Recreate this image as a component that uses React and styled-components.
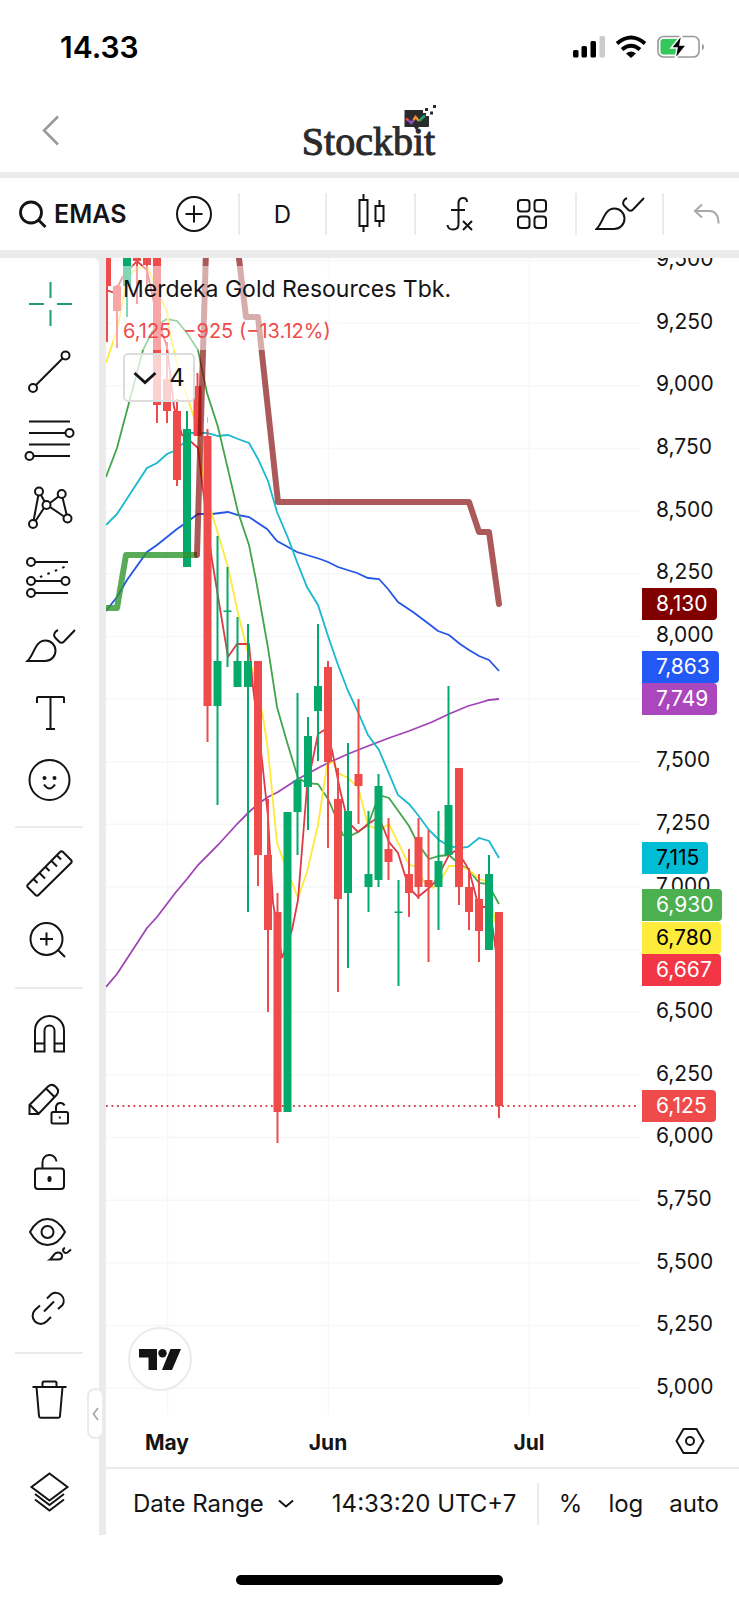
import React, { useState } from 'react'
import styled, { createGlobalStyle } from 'styled-components'

// month boundaries and every 250 in price, in chart units
const gridX = [167.5, 328.5, 529.5]
const gridY = Array.from({ length: 19 }, (_, i) => 260.5 + i * 62.65)

// x, high, low, body top, body bottom, colour
const candles = [
    [107, 250, 342, 250, 286, 'r'],
    [117, 285, 348, 286, 311, 'r'],
    [127, 250, 317, 250, 286, 'g'],
    [137, 250, 304, 250, 261, 'r'],
    [147, 250, 286, 250, 265, 'r'],
    [157, 250, 423, 250, 405, 'r'],
    [167, 342, 423, 379, 411, 'r'],
    [177, 399, 486, 411, 480, 'r'],
    [187, 411, 567, 429, 567, 'g'],
    [197.5, 373, 436, 386, 436, 'r'],
    [207.5, 429, 742, 436, 706, 'r'],
    [217.5, 536, 805, 661, 706, 'g'],
    [227.5, 567, 667, 610.5, 612, 'g'],
    [237.5, 617, 687, 661, 687, 'g'],
    [248, 624, 912, 661, 687, 'g'],
    [258, 661, 886, 661, 855, 'r'],
    [268, 799, 1012, 855, 930, 'r'],
    [277.5, 893, 1143, 912, 1112, 'r'],
    [287.5, 812, 1112, 812, 1112, 'g'],
    [297.5, 693, 855, 780, 812, 'g'],
    [308, 717, 830, 736, 787, 'g'],
    [318, 624, 761, 686, 711, 'g'],
    [328, 661, 848, 667, 762, 'r'],
    [338, 768, 992, 799, 899, 'r'],
    [348, 743, 968, 811, 893, 'g'],
    [358.5, 699, 824, 774, 786, 'r'],
    [368.5, 811, 912, 874, 887, 'g'],
    [378.5, 774, 887, 786, 880, 'g'],
    [388.5, 818, 880, 849, 862, 'r'],
    [398.5, 880, 986, 911.5, 913, 'g'],
    [409, 849, 917, 874, 893, 'r'],
    [418.5, 818, 899, 837, 887, 'r'],
    [428.5, 830, 962, 880, 887, 'r'],
    [438.5, 811, 930, 861, 887, 'g'],
    [448.5, 686, 855, 805, 855, 'g'],
    [459, 768, 905, 768, 887, 'r'],
    [469, 868, 930, 887, 912, 'r'],
    [479, 874, 962, 899, 931, 'r'],
    [489, 855, 950, 874, 950, 'g'],
    [499, 912, 1118, 912, 1106, 'r'],
]

const averages = [
    ['#a044b5', '106,987 117,974 147,928 157,917 176,892 187,879 198,865 218,845 238,823 248,813 258,804 268,797 278,792 298,779 320,767 328,763 348,754 368,746 389,738 409,731 432,722 449,714 468,706 479,703 489,700 499,699'],
    ['#2455e6', '106,611 117,597 127,580 147,552 157,545 177,529 187,522 198,514 212,514 228,512 238,515 249,517 267,529 277,541 297,552 320,559 328,562 338,567 357,573 368,578 379,579 388,589 398,602 413,612 429,624 438,631 449,635 460,644 469,650 479,656 489,660 499,671'],
    ['#18b8cf', '106,525 117,514 147,468 157,463 167,454 174,451 186,441 190,433 207,433 218,436 228,435 238,439 249,443 258,459 268,481 277,512 288,538 297,562 307,587 318,605 328,636 338,665 348,691 358,712 368,735 379,750 398,795 409,804 418,815 429,830 439,840 449,846 459,848 468,847 479,838 489,841 499,858'],
    ['#43a54a', '106,477 117,448 143,350 152,332 162,322 167,319 177,321 187,333 198,350 207,393 218,427 238,512 249,545 256,580 268,648 277,707 287,742 298,778 307,783 318,784 328,799 335,815 343,835 348,837 358,832 368,825 379,795 389,798 409,826 418,844 429,859 439,856 449,855 459,864 469,870 479,883 488,884 499,904'],
    ['#fdea3b', '106,363 117,330 127,280 137,267 148,268 157,290 167,312 170,333 180,377 187,396 198,430 203,477 212,514 228,567 238,613 248,653 258,693 263,717 268,750 277,843 284,862 298,898 307,872 318,825 327,765 333,762 338,773 348,778 358,787 368,825 379,830 389,824 409,865 415,866 425,883 433,888 439,883 449,866 459,866 469,870 479,879 489,882 493,910 499,940'],
    ['#dc3a45', '106,290 115,293 122,278 137,261 147,270 157,317 167,347 174,407 182,435 187,438 198,448 203,490 212,560 228,657 237,644 249,644 253,687 262,760 268,817 273,903 282,958 292,930 298,900 307,787 318,734 324,730 332,750 340,790 348,822 358,832 368,824 379,817 389,842 398,853 409,888 418,897 429,888 435,882 449,855 455,851 463,860 469,870 477,900 483,907 489,907 493,930 499,975'],
]

const months = ['May', 'Jun', 'Jul']
const prices = ['9,500', '9,250', '9,000', '8,750', '8,500', '8,250', '8,000', '', '7,500', '7,250', '7,000', '', '6,500', '6,250', '6,000', '5,750', '5,500', '5,250', '5,000']

// y is the distance from the top of the price scale
const tags = [
    { text: '8,130', y: 330, bg: '#800000' },
    { text: '7,863', y: 393, bg: '#2458f5' },
    { text: '7,749', y: 425, bg: '#ab47bc' },
    { text: '7,115', y: 584, bg: '#00bcd4', dark: true },
    { text: '6,930', y: 631, bg: '#4caf50' },
    { text: '6,780', y: 664, bg: '#ffeb3b', dark: true },
    { text: '6,667', y: 696, bg: '#f23645' },
    { text: '6,125', y: 832, bg: '#ef4b4b' },
]

const Brush = () => (
    <>
        <path d="M2.5 41C9 35 10 20.5 20.5 20.5c5.500 0 10 4.500 10 10C30.500 36.500 26 41 20 41z" />
        <path d="M33 10c-3.500 1.500-5 5-3 7.500l4 4c1.500 1.500 3.500 1.500 5 0L50 10" />
    </>
)

const tools = [
    [
        ['Cross', <g stroke="#1fa06a"><path d="M4 24h15M32 24h15M25.500 2v16M25.500 30v16" /></g>],
        ['Trend line', <><path d="M11 37L37.500 10.500" /><circle cx="8" cy="40" r="4" /><circle cx="40.500" cy="7.500" r="4" /></>],
        ['Fib retracement', <><path d="M4 5.500h41M4 17h36M4 28.500h41M9 40h36" /><circle cx="44.500" cy="17" r="4" /><circle cx="4.500" cy="40" r="4" /></>],
        ['Patterns', <>
            <path d="M13.300 11.500L8.700 36M16 11l3.500 6.500M19 24L10.500 37M25 19l8.500-6.500M25 23l14 9.500M37.600 14l4 16.500" />
            <circle cx="14" cy="7.500" r="4" /><circle cx="36.700" cy="10" r="4" /><circle cx="21.500" cy="21" r="4" />
            <circle cx="8" cy="40" r="4" /><circle cx="42.500" cy="34.500" r="4" />
        </>],
        ['Forecast', <>
            <path d="M10 10h33M10 29h26M10 41h33" /><path d="M15 25L43 13.500" strokeDasharray="2.500 5.500" />
            <circle cx="6" cy="10" r="4" /><circle cx="6" cy="29" r="4" /><circle cx="6" cy="41" r="4" /><circle cx="40.500" cy="29" r="4" />
        </>],
        ['Brush', <Brush />],
        ['Text', <path d="M12 15v-5q0-1 1-1h25q1 0 1 1v5M25.500 9v32M21 41h9" />],
        ['Icons', <>
            <circle cx="24.500" cy="24" r="20" /><path d="M19 28.500q5.500 8 11 0" />
            <g fill="#141414" stroke="none"><circle cx="19.500" cy="22" r="2" /><circle cx="29.500" cy="22" r="2" /></g>
        </>],
    ],
    [
        ['Measure', <>
            <path d="M3 35.500L35 3q1.500-1.500 3 0l8 8q1.500 1.500 0 3L13.500 46q-1.500 1.500-3 0L3 38.500q-1.500-1.500 0-3z" />
            <path d="M8.500 30l4 4M14.500 24l5.500 5.500M20.500 18l4 4M26.500 12l5.500 5.500M32 6.500l4 4" />
        </>],
        ['Zoom in', <><circle cx="21.500" cy="22" r="16" /><path d="M33 33l7 7M21.500 15.500v13M15 22h13" /></>],
    ],
    [
        ['Magnet', <path d="M10 41.500V20.500a14.500 14.500 0 0129 0v21h-9.500v-21a5 5 0 00-10 0v21zM10 33.500h9.500M29.500 33.500h9.500" />],
        ['Keep drawing', <>
            <path d="M4.500 36v-9L23 8.500q4-3.500 8 0.500q4 4 0.500 8L13.500 36zM5 27l9 9M21 10.500l9 9" />
            <rect x="26.500" y="34" width="16.500" height="11.500" rx="1.500" /><path d="M31 34v-5a4.500 4.500 0 018.500-1.500M34.800 38.500v2" />
        </>],
        ['Lock drawings', <>
            <rect x="10" y="22.500" width="29" height="20.500" rx="3" /><path d="M17.500 22.500v-6a7 7 0 0114-1" />
            <rect x="23.500" y="31" width="2" height="4" rx="1" fill="#141414" />
        </>],
        ['Hide drawings', <>
            <path d="M5 18Q12 5 22.500 5T40 18Q33 31 22.500 31T5 18z" /><circle cx="22.500" cy="18" r="6" />
            <path d="M25 45.500c3-2 3.500-7 8-7q4 0 4 3.500t-4 3.500zM40 34q-3 1-1.500 3.500t4 1L46 35.500" />
        </>],
        ['Sync', <path d="M22 16.500l4.500-4.500a8 8 0 0111 11l-4.500 4M15 23.500L10 28a8 8 0 0011.500 11.500l4.500-4.500M19 29.500l10-10" />],
    ],
    [
        ['Remove', <path d="M7.500 12h34M17.500 12V8q0-1.500 1.500-1.500h11q1.500 0 1.500 1.500v4M11.500 12l2.500 29q.2 1.800 2 1.800h17q1.800 0 2-1.800L37.500 12" />],
        ['Object tree', <path d="M24.500 5.500l18 13.500-18 13.500L6.500 19zM10 26l14.500 11L39 26M10 31.500l14.500 11 14.500-11" />],
    ],
]

export default function App() {
    const [tool, setTool] = useState('Cross')
    return (
        <Screen>
            <GlobalStyle />
            <StatusBar>
                <Clock>14.33</Clock>
                <StatusIcons />
            </StatusBar>
            <Header>
                <BackButton aria-label="Back">
                    <svg width="18" height="31" viewBox="0 0 18 31" fill="none" stroke="#999" strokeWidth="2.5"><path d="M16 1.500L2 15.500l14 14" /></svg>
                </BackButton>
                <Logo>
                    Stockbit
                    <LogoMark width="34" height="28" viewBox="0 0 34 28">
                        <path d="M1.500 6H20v3h3v3h3v10q0 1-1 1H16l-2.500 3.500L11 23H1.500z" fill="#2b2b2b" />
                        <path d="M3 14.500l2.500 2" stroke="#ef4056" strokeWidth="2.400" fill="none" />
                        <path d="M5.500 16.500l3 2.500 2-3" stroke="#8a4fc0" strokeWidth="2.400" fill="none" />
                        <path d="M10.500 16l2-3 3.500 4" stroke="#f7912f" strokeWidth="2.400" fill="none" />
                        <path d="M16 17l6-5.500" stroke="#18a86b" strokeWidth="2.400" fill="none" />
                        <path d="M22 4h3v3h-3zM27 7.500h3v3h-3zM30 1h3v3h-3z" fill="#2b2b2b" />
                    </LogoMark>
                </Logo>
            </Header>
            <Toolbar>
                <ToolGroup $spread>
                    <SymbolButton>
                        <svg width="28" height="28" viewBox="0 0 28 28" fill="none" stroke="#141414" strokeWidth="2.800"><circle cx="12" cy="12.500" r="10.500" /><path d="M19.500 20l7 7" /></svg>
                        EMAS
                    </SymbolButton>
                    <IconButton aria-label="Compare">
                        <svg width="38" height="38" viewBox="0 0 38 38" fill="none" stroke="#141414" strokeWidth="2"><circle cx="19" cy="19" r="17" /><path d="M10.500 19h17M19 10.500v17" /></svg>
                    </IconButton>
                </ToolGroup>
                <ToolGroup><IconButton>D</IconButton></ToolGroup>
                <ToolGroup>
                    <IconButton aria-label="Candles">
                        <svg width="30" height="40" viewBox="0 0 30 40" fill="none" stroke="#141414" strokeWidth="2"><path d="M3.500 6h8v26h-8zM7.500 0v6M7.500 32v6M19.500 12h8v15h-8zM23.500 6v6M23.500 27v6" /></svg>
                    </IconButton>
                </ToolGroup>
                <ToolGroup $spread>
                    <IconButton aria-label="Indicators">
                        <svg width="28" height="36" viewBox="0 0 28 36" fill="none" stroke="#141414" strokeWidth="2"><path d="M21 6q0-4-4-4-4.500 0-4.500 5.500V28q0 5.500-5.500 5.500-5 0-5.500-4.500M5 14h14M17 25l9 9M26 25l-9 9" /></svg>
                    </IconButton>
                    <IconButton aria-label="Templates">
                        <svg width="32" height="32" viewBox="0 0 32 32" fill="none" stroke="#141414" strokeWidth="2"><rect x="2" y="2" width="11.500" height="11.500" rx="3" /><rect x="18.500" y="2" width="11.500" height="11.500" rx="3" /><rect x="2" y="18.500" width="11.500" height="11.500" rx="3" /><rect x="18.500" y="18.500" width="11.500" height="11.500" rx="3" /></svg>
                    </IconButton>
                </ToolGroup>
                <ToolGroup>
                    <IconButton aria-label="Draw">
                        <svg width="50" height="34" viewBox="1 9 50 34" fill="none" stroke="#141414" strokeWidth="2"><Brush /></svg>
                    </IconButton>
                </ToolGroup>
                <ToolGroup>
                    <IconButton aria-label="Undo">
                        <svg width="28" height="22" viewBox="0 0 28 22" fill="none" stroke="#a8a8a8" strokeWidth="2"><path d="M9 1.500L2 8l7 6.500M2 8h14q9.500 0 9.500 12.500" /></svg>
                    </IconButton>
                </ToolGroup>
            </Toolbar>
            <Main>
                <Sidebar>
                    {tools.map((group, i) => (
                        <SideGroup key={i}>
                            {group.map(([name, icon]) => (
                                <SideButton key={name} aria-label={name} aria-pressed={tool === name} onClick={() => setTool(name)}>
                                    <svg width="48" height="48" viewBox="0 0 48 48" fill="none" stroke="#141414" strokeWidth="2" overflow="visible">{icon}</svg>
                                </SideButton>
                            ))}
                        </SideGroup>
                    ))}
                    <Collapse aria-label="Hide toolbar">
                        <svg width="7" height="14" viewBox="0 0 7 14" fill="none" stroke="#aaa" strokeWidth="1.800"><path d="M6 1L1.500 7 6 13" /></svg>
                    </Collapse>
                </Sidebar>
                <Panel>
                    <ChartGrid>
                        <Pane>
                            <Chart />
                            <Legend>
                                <LegendRow>Merdeka Gold Resources Tbk.</LegendRow>
                                <LegendRow $values><span>6,125</span><span>−925 (−13.12%)</span></LegendRow>
                                <Indicators>
                                    <svg width="24" height="14" viewBox="0 0 24 14" fill="none" stroke="#141414" strokeWidth="2.800"><path d="M1.500 2L12 11.500 22.500 2" /></svg>
                                    4
                                </Indicators>
                            </Legend>
                            <TvLink href="#" aria-label="TradingView">
                                <svg width="42" height="21" viewBox="0 0 42 21" fill="#141414"><path d="M0 0h18v21H9.500V8.500H0z" /><circle cx="23.500" cy="4.200" r="4.200" /><path d="M31.500 0H42L33 21H23z" /></svg>
                            </TvLink>
                        </Pane>
                        <PriceScale>
                            <Prices>{prices.map((p, i) => <li key={i}>{p}</li>)}</Prices>
                            {tags.map(t => <Tag key={t.text} $bg={t.bg} $dark={t.dark} style={{ top: t.y }}>{t.text}</Tag>)}
                        </PriceScale>
                        <TimeScale>{months.map(m => <span key={m}>{m}</span>)}</TimeScale>
                        <Settings aria-label="Chart settings">
                            <svg width="30" height="28" viewBox="0 0 30 28" fill="none" stroke="#141414" strokeWidth="2"><path d="M8.500 2h13L28.500 14l-7 12h-13L1.500 14z" /><circle cx="15" cy="14" r="4" /></svg>
                        </Settings>
                    </ChartGrid>
                    <BottomBar>
                        <RangeButtons>
                            <RangeButton>
                                Date Range
                                <svg width="16" height="10" viewBox="0 0 16 10" fill="none" stroke="#141414" strokeWidth="2"><path d="M1 1.500l7 6 7-6" /></svg>
                            </RangeButton>
                            <TextButton>14:33:20 UTC+7</TextButton>
                        </RangeButtons>
                        <ScaleButtons>
                            <TextButton>%</TextButton>
                            <TextButton>log</TextButton>
                            <TextButton>auto</TextButton>
                        </ScaleButtons>
                    </BottomBar>
                </Panel>
            </Main>
            <HomeArea><HomeBar /></HomeArea>
        </Screen>
    )
}

function Chart() {
    return (
        <ChartSvg viewBox="106 258 535 1156" preserveAspectRatio="none">
            <g stroke="#f7f7f7" strokeWidth="1.5">
                {gridX.map(x => <path key={x} d={`M${x} 258V1414`} />)}
                {gridY.map(y => <path key={y} d={`M106 ${y}H640`} />)}
            </g>
            <g fill="none" strokeWidth="1.800">
                {averages.map(([color, points]) => <polyline key={color} points={points} stroke={color} />)}
            </g>
            <path d="M106 1106H637" stroke="#d9464a" strokeWidth="1.800" strokeDasharray="1.800 3.700" />
            {candles.map(([x, high, low, top, bottom, c]) => (
                <g key={x} fill={c === 'g' ? '#05aa6b' : '#ef4b4b'}>
                    <rect x={x - 1} y={high} width="2" height={low - high} />
                    <rect x={x - 4} y={top} width="8" height={bottom - top} />
                </g>
            ))}
            <path d="M207.500 417v6" stroke="#ef4b4b" opacity="0.5" />
            <g fill="none" strokeWidth="6" strokeLinejoin="round">
                <path d="M106 608h11l9-53h71" stroke="#2e962f" opacity="0.8" />
                <path d="M197 555L206 250M238 250l8 67h12l20 185h191l10 30h10l10 72" stroke="#800000" strokeLinecap="round" opacity="0.65" />
            </g>
        </ChartSvg>
    )
}

function StatusIcons() {
    return (
        <svg width="132" height="24" viewBox="572 35 132 24" fill="none">
            <g fill="#000"><rect x="573" y="50" width="5.500" height="7.500" rx="1.500" /><rect x="581.500" y="46" width="5.500" height="11.500" rx="1.500" /><rect x="590.500" y="41" width="5.500" height="16.500" rx="1.500" /></g>
            <rect x="599.500" y="36" width="5.500" height="21.500" rx="1.500" fill="#ccc" />
            <g stroke="#000" strokeWidth="4"><path d="M617 43.500q14-12 28 0M622 49.500q9-7.500 18 0" /></g>
            <path d="M626 53.500q5-4 10 0l-5 4.500z" fill="#000" />
            <rect x="658" y="36.500" width="41" height="20.500" rx="5.500" stroke="#999" strokeWidth="1.600" />
            <path d="M702 43.500q2 1 2 3.500t-2 3.500z" fill="#999" />
            <rect x="660.500" y="39" width="19" height="15.500" rx="3" fill="#34c759" />
            <path d="M682 34.500L671 48h6l-2 11.500L686.500 45h-6.500z" fill="#000" stroke="#fff" strokeWidth="1.500" />
        </svg>
    )
}

const GlobalStyle = createGlobalStyle`
    *{box-sizing:border-box;}
    body{
        margin:0;
        background:#fff;
        color:#141414;
        font-family:Inter, sans-serif;
    }
    svg{display:block;flex-shrink:0;}
    button{
        padding:0;
        border:0;
        background:none;
        color:inherit;
        font:inherit;
        white-space:nowrap;
        cursor:pointer;
    }
`;
const Screen = styled.div`
    display:flex;
    flex-direction:column;
    min-height:100vh;
`;
const StatusBar = styled.div`
    display:flex;
    justify-content:space-between;
    align-items:center;
    height:94px;
    padding:0 35px 0 60px;
`;
const Clock = styled.span`
    font-size:30px;
    font-weight:600;
    color:#000;
`;
const Header = styled.header`
    display:grid;
    grid-template-columns:1fr auto 1fr;
    align-items:center;
    height:78px;
    padding:0 44px 0 42px;
`;
const BackButton = styled.button`
    justify-self:start;
    margin-bottom:6px;
`;
const Logo = styled.div`
    position:relative;
    padding-top:18px;
    font-family:"Liberation Serif", serif;
    font-size:40px;
    line-height:44px;
    color:#2b2b2b;
    -webkit-text-stroke:1px #2b2b2b;
`;
const LogoMark = styled.svg`
    position:absolute;
    top:2px;
    right:-2px;
`;
const Toolbar = styled.div`
    display:grid;
    grid-template-columns:240fr 87fr 89fr 161fr 87fr 75fr;
    align-items:center;
    height:86px;
    border-top:6px solid #ebebeb;
    border-bottom:8px solid #ebebeb;
`;
const ToolGroup = styled.div`
    display:flex;
    justify-content:${p => p.$spread ? 'space-between' : 'center'};
    align-items:center;
    min-width:0;
    height:42px;
    padding:${p => p.$spread ? '0 27px 0 30px' : '0'};
    border-right:2px solid #ebebeb;
    &:first-child{padding:0 25px 0 19px;}
    &:last-child{border-right:0;padding-left:10px;}
`;
const IconButton = styled.button`
    font-size:24px;
`;
const SymbolButton = styled.button`
    display:flex;
    align-items:center;
    gap:7px;
    font-size:25px;
    font-weight:600;
`;
const Main = styled.main`
    display:flex;
    background:#ebebeb;
`;
const Sidebar = styled.div`
    position:relative;
    display:flex;
    flex-direction:column;
    flex:none;
    width:99px;
    margin-right:7px;
    padding:12px 0 9px;
    border-top-right-radius:6px;
    background:#fff;
`;
const SideGroup = styled.div`
    display:flex;
    flex-direction:column;
    & + &{
        margin-top:12px;
    }
    & + &::before{
        content:'';
        height:2px;
        margin:0 16px 11px 15px;
        background:#ebebeb;
    }
    &:nth-last-of-type(1){
        flex:1;
    }
    &:nth-last-of-type(1) > :last-child{
        margin-top:auto;
    }
`;
const SideButton = styled.button`
    display:flex;
    justify-content:center;
    align-items:center;
    height:68px;
    padding-right:2px;
`;
const Collapse = styled.button`
    position:absolute;
    right:-5px;
    bottom:96px;
    display:flex;
    justify-content:center;
    align-items:center;
    width:17px;
    height:51px;
    border:2px solid #ebebeb;
    border-radius:8px;
    background:#fff;
`;
const Panel = styled.div`
    flex:1;
    min-width:0;
    background:#fff;
`;
const ChartGrid = styled.div`
    display:grid;
    grid-template-columns:1fr 98px;
    grid-template-rows:auto 53px;
`;
const Pane = styled.div`
    position:relative;
    min-width:0;
`;
const ChartSvg = styled.svg`
    width:100%;
    height:1156px;
`;
const Legend = styled.div`
    position:absolute;
    top:8px;
    left:7px;
    display:flex;
    flex-direction:column;
    align-items:flex-start;
`;
const LegendRow = styled.div`
    display:flex;
    gap:12px;
    padding:0 10px;
    background:rgba(255,255,255,0.5);
    font-size:${p => p.$values ? '20px' : '23px'};
    line-height:${p => p.$values ? '38px' : '46px'};
    color:${p => p.$values ? '#ef4b4b' : '#141414'};
    white-space:nowrap;
`;
const Indicators = styled.button`
    display:flex;
    justify-content:center;
    align-items:center;
    gap:12px;
    width:72px;
    height:49px;
    margin:3px 10px;
    border:2px solid #dcdcdc;
    border-radius:5px;
    background:rgba(255,255,255,0.75);
    font-size:24px;
`;
const TvLink = styled.a`
    position:absolute;
    left:22px;
    bottom:23px;
    display:flex;
    justify-content:center;
    align-items:center;
    width:64px;
    height:64px;
    border:2px solid #ebebeb;
    border-radius:50%;
    background:#fff;
`;
const PriceScale = styled.div`
    position:relative;
    height:1156px;
    overflow:hidden;
    font-size:21px;
`;
const Prices = styled.ul`
    display:flex;
    flex-direction:column;
    justify-content:space-between;
    height:1154px;
    margin:-12px 0 0;
    padding:0 0 0 15px;
    list-style:none;
    li{
        height:26px;
        line-height:26px;
    }
`;
const Tag = styled.div`
    position:absolute;
    left:1px;
    height:32px;
    padding:0 9px 0 14px;
    border-radius:0 4px 4px 0;
    line-height:32px;
    background:${p => p.$bg};
    color:${p => p.$dark ? '#000' : '#fff'};
`;
const TimeScale = styled.div`
    display:grid;
    grid-template-columns:122fr 200fr 202fr 11fr;
    align-items:center;
    padding-top:4px;
    text-align:center;
    font-size:21px;
    font-weight:700;
`;
const Settings = styled.button`
    display:flex;
    justify-content:center;
    align-items:center;
`;
const BottomBar = styled.div`
    display:flex;
    justify-content:space-between;
    align-items:center;
    height:68px;
    padding:3px 20px 0 27px;
    border-top:2px solid #ebebeb;
    font-size:24px;
`;
const TextButton = styled.button`
    line-height:42px;
`;
const RangeButtons = styled.div`
    display:flex;
    gap:38px;
`;
const RangeButton = styled(TextButton)`
    display:flex;
    align-items:center;
    gap:14px;
`;
const ScaleButtons = styled.div`
    display:flex;
    gap:26px;
    padding-left:20px;
    border-left:2px solid #ebebeb;
`;
const HomeArea = styled.footer`
    display:flex;
    flex:1;
    justify-content:center;
    align-items:flex-end;
    padding:40px 0 15px;
`;
const HomeBar = styled.div`
    width:36%;
    height:10px;
    border-radius:5px;
    background:#000;
`;
